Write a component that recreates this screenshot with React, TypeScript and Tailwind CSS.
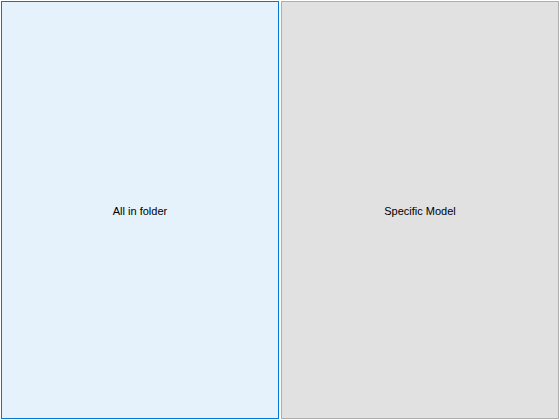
export default function App() {
  return (
    <div className="w-[560px] h-[420px] bg-white p-px flex gap-[2px] font-['Liberation_Sans',Arial,sans-serif] text-[11px] text-black">
      <button className="w-[278px] h-[418px] bg-[#e5f1fb] border border-[#0078d7] pt-[2px] flex items-center justify-center">
        All in folder
      </button>
      <button className="w-[278px] h-[418px] bg-[#e1e1e1] border border-[#adadad] pt-[2px] flex items-center justify-center">
        Specific Model
      </button>
    </div>
  );
}
